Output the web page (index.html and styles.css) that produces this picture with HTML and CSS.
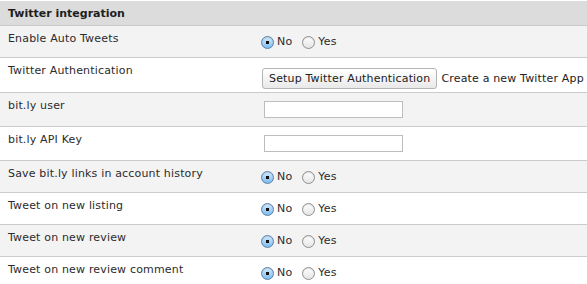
FILE: index.html
```html
<!DOCTYPE html>
<html lang="en">
<head>
  <meta charset="UTF-8">
  <title>Twitter integration</title>
  <link rel="stylesheet" href="styles.css">
</head>
<body>
  <div class="panel">
    <div class="panel-head">Twitter integration</div>

    <div class="row alt">
      <div class="label">Enable Auto Tweets</div>
      <div class="field">
        <label class="opt"><input type="radio" name="auto" checked> No</label>
        <label class="opt"><input type="radio" name="auto"> Yes</label>
      </div>
    </div>

    <div class="row tall">
      <div class="label">Twitter Authentication</div>
      <div class="field">
        <button class="btn">Setup Twitter Authentication</button>
        <span class="note">Create a new Twitter App</span>
      </div>
    </div>

    <div class="row alt input-row">
      <div class="label">bit.ly user</div>
      <div class="field"><input type="text" class="text"></div>
    </div>

    <div class="row input-row">
      <div class="label">bit.ly API Key</div>
      <div class="field"><input type="text" class="text"></div>
    </div>

    <div class="row alt">
      <div class="label">Save bit.ly links in account history</div>
      <div class="field">
        <label class="opt"><input type="radio" name="save" checked> No</label>
        <label class="opt"><input type="radio" name="save"> Yes</label>
      </div>
    </div>

    <div class="row">
      <div class="label">Tweet on new listing</div>
      <div class="field">
        <label class="opt"><input type="radio" name="listing" checked> No</label>
        <label class="opt"><input type="radio" name="listing"> Yes</label>
      </div>
    </div>

    <div class="row alt">
      <div class="label">Tweet on new review</div>
      <div class="field">
        <label class="opt"><input type="radio" name="review" checked> No</label>
        <label class="opt"><input type="radio" name="review"> Yes</label>
      </div>
    </div>

    <div class="row">
      <div class="label">Tweet on new review comment</div>
      <div class="field">
        <label class="opt"><input type="radio" name="comment" checked> No</label>
        <label class="opt"><input type="radio" name="comment"> Yes</label>
      </div>
    </div>
  </div>
</body>
</html>
```

FILE: styles.css
```css
body {
  margin: 0;
  font-family: "DejaVu Sans", Verdana, sans-serif;
  font-size: 11px;
  letter-spacing: 0.17px;
  color: #2b2b2b;
  background: #fff;
  overflow: hidden;
}
.panel {
  padding-top: 1px;
}
.panel-head {
  height: 24px;
  line-height: 26px;
  padding: 0 8px;
  background: #dcdcdc;
  font-weight: bold;
  letter-spacing: 0;
  color: #1e1e1e;
}
.row {
  display: flex;
  height: 32px;
  box-sizing: border-box;
  border-top: 1px solid #cbcbcb;
  background: #fff;
}
.row.alt {
  background: #f3f3f3;
}
.row.tall {
  height: 35px;
}
.row.input-row {
  height: 34px;
}
.label {
  width: 244px;
  padding: 6px 8px 0;
  line-height: 14px;
}
.field {
  display: flex;
  align-items: flex-start;
  padding-top: 9px;
  white-space: nowrap;
}
.opt {
  display: flex;
  align-items: center;
  margin-right: 9px;
  line-height: 14px;
}
.opt input {
  appearance: none;
  -webkit-appearance: none;
  width: 13px;
  height: 13px;
  margin: 0 3px 0 1px;
  border: 1px solid #8f8f8f;
  border-radius: 50%;
  box-sizing: border-box;
  background: linear-gradient(#ffffff, #e4e4e4);
  box-shadow: inset 0 1px 1px rgba(0, 0, 0, 0.12);
}
.opt input:checked {
  border-color: #5a7fa8;
  background: radial-gradient(circle, #111 0, #111 1.5px, transparent 2px),
    linear-gradient(#d6ecfc, #7bbcef);
}
.row.tall .field {
  padding-top: 6px;
  align-items: center;
}
.btn {
  margin-left: 2px;
  height: 21px;
  padding: 0 6px;
  font-family: "DejaVu Sans", Verdana, sans-serif;
  font-size: 11px;
  letter-spacing: 0.17px;
  color: #222;
  border: 1px solid #b4b4b4;
  border-radius: 3px;
  background: linear-gradient(#ffffff, #e9e9e9);
}
.note {
  margin-left: 4px;
  color: #222;
}
.input-row .field {
  padding-top: 8px;
}
.text {
  margin: 0 0 0 4px;
  width: 139px;
  height: 17px;
  box-sizing: border-box;
  border: 1px solid #bdbdbd;
  background: #fff;
  padding: 0 2px;
}
```
